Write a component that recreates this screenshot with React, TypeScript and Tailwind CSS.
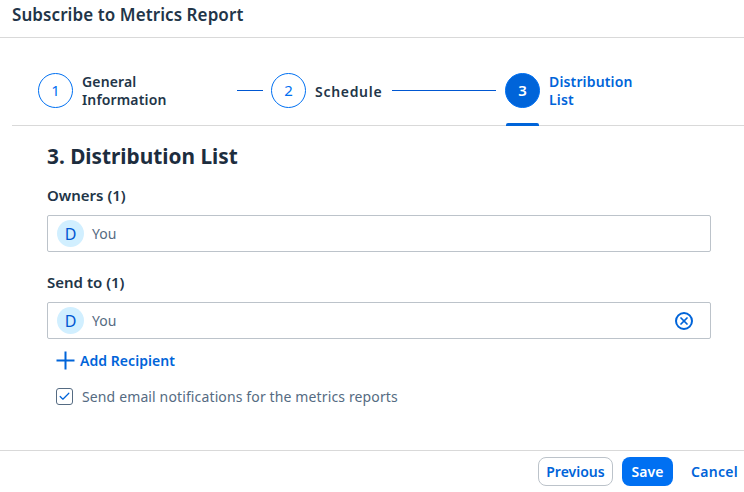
import { X, Check } from 'lucide-react';

function Token() {
  return (
    <div className="flex items-center gap-[8px]">
      <div className="w-[27px] h-[27px] rounded-full bg-[#d1efff] text-[#0057d2] flex items-center justify-center text-[16px]">D</div>
      <span className="text-[14px] text-[#556b82]">You</span>
    </div>
  );
}

function Step({ num, label, active, wide }: { num: number; label: React.ReactNode; active?: boolean; wide?: boolean }) {
  return (
    <div className="flex items-center gap-[9px] relative">
      <div
        className={`w-[35px] h-[35px] rounded-full flex items-center justify-center text-[15px] border border-[#0070f2] ${
          active ? 'bg-[#0064d9] text-white font-semibold' : 'text-[#0070f2]'
        }`}
      >
        {num}
      </div>
      <div
        className={`text-[14px] leading-[18px] font-semibold ${wide ? 'tracking-[0.7px] pt-[4px]' : 'tracking-[0.15px] pt-[2px]'} ${
          active ? 'text-[#0064d9]' : 'text-[#223548]'
        }`}
      >
        {label}
      </div>
    </div>
  );
}

export default function App() {
  return (
    <div className="w-[744px] h-[492px] bg-white flex flex-col overflow-hidden font-['Noto_Sans',sans-serif]">
      <div className="h-[38px] shrink-0 border-b border-[#d9d9d9] px-[12px] pb-[8px] flex items-center text-[17px] font-semibold text-[#223548] tracking-[0.08px]">
        Subscribe to Metrics Report
      </div>

      <div className="h-[88px] shrink-0 ml-[12px] border-b border-[#d9d9d9] pl-[26px] pt-[17px] flex items-center relative">
        <div className="w-[225px] flex items-center">
          <Step num={1} label={<>General<br />Information</>} />
          <div className="ml-auto w-[26px] h-px bg-[#0057d2]" />
        </div>
        <div className="ml-[8px] w-[225px] flex items-center">
          <Step num={2} wide label="Schedule" />
          <div className="ml-auto w-[104px] h-px bg-[#0057d2]" />
        </div>
        <div className="ml-[9px]">
          <Step num={3} active label={<>Distribution<br />List</>} />
        </div>
        <div className="absolute left-[494px] bottom-[-1px] w-[33px] h-[3px] bg-[#0064d9] rounded-t-[2px]" />
      </div>

      <div className="flex-1 px-[47px] pr-[33px]">
        <h2 className="mt-[17px] text-[20.8px] leading-[26px] font-bold text-[#1d2d3e]">3. Distribution List</h2>

        <div className="mt-[17px] text-[15px] leading-[18px] font-semibold text-[#223548]">Owners (1)</div>
        <div className="mt-[11px] h-[37px] border border-[#bcc3ca] rounded-[2px] px-[9px] flex items-center">
          <Token />
        </div>

        <div className="mt-[21px] text-[15px] leading-[18px] font-semibold text-[#223548]">Send to (1)</div>
        <div className="mt-[11px] h-[37px] border border-[#bcc3ca] rounded-[2px] pl-[9px] pr-[17px] flex items-center justify-between">
          <Token />
          <div className="w-[18px] h-[18px] rounded-full border-2 border-[#0064d9] flex items-center justify-center">
            <X className="w-[12px] h-[12px] text-[#0064d9]" strokeWidth={3.5} />
          </div>
        </div>

        <div className="mt-[11px] ml-[9px] flex items-center gap-[5px] text-[14px] font-semibold text-[#0064d9] tracking-[0.05px]">
          <svg width="19" height="19" viewBox="0 0 19 19" fill="none" stroke="currentColor" strokeWidth="2">
            <path d="M0.5 9.5H18.5M9.5 0.5V18.5" />
          </svg>
          Add Recipient
        </div>

        <div className="mt-[15px] ml-[9px] flex items-center gap-[9px]">
          <div className="w-[17px] h-[17px] border border-[#556b82] rounded-[3px] flex items-center justify-center">
            <Check className="w-[13px] h-[13px] text-[#0064d9]" strokeWidth={2.25} />
          </div>
          <span className="text-[14px] text-[#556b82] tracking-[0.13px]">Send email notifications for the metrics reports</span>
        </div>
      </div>

      <div className="h-[42px] shrink-0 border-t border-[#d9d9d9] flex items-center justify-end pl-[12px] pr-[6px] pb-[1px] text-[14px] font-semibold">
        <button className="h-[29px] w-[75px] rounded-[8px] border border-[#bcc3ca] text-[#0064d9] bg-white">Previous</button>
        <button className="ml-[9px] h-[29px] w-[51px] rounded-[8px] bg-[#0070f2] text-white">Save</button>
        <button className="ml-[18px] text-[#0064d9] tracking-[0.3px]">Cancel</button>
      </div>
    </div>
  );
}
